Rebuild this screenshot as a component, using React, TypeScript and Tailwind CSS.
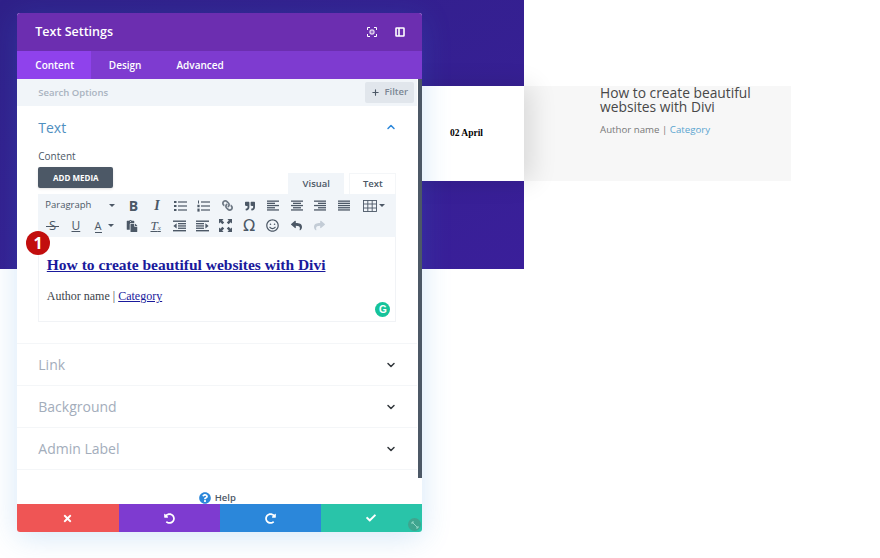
import type { ReactNode } from "react";
import { ChevronDown, ChevronUp, Plus } from "lucide-react";
import { FaCheck, FaLink, FaQuoteRight, FaPaste, FaRegSmile, FaReply, FaShare, FaTimes, FaUndoAlt, FaRedoAlt, FaQuestionCircle } from "react-icons/fa";

const OPEN_SANS = "[font-family:'Open_Sans',sans-serif]";
const SERIF = "[font-family:'Liberation_Serif',serif]";

// tinymce style glyph made of plain horizontal lines
function Lines({ rows }: { rows: [number, number][] }) {
  return (
    <svg width="13" height="12" viewBox="0 0 13 12" fill="#4c5866">
      {rows.map(([x, w], i) => (
        <rect key={i} x={x} y={i * (11 / rows.length) + 0.5} width={w} height="1.3" />
      ))}
    </svg>
  );
}

const ALIGN_LEFT: [number, number][] = [[0, 12], [0, 8], [0, 12], [0, 8], [0, 12]];
const ALIGN_CENTER: [number, number][] = [[0, 12], [2, 8], [0, 12], [2, 8], [0, 12]];
const ALIGN_RIGHT: [number, number][] = [[0, 12], [4, 8], [0, 12], [4, 8], [0, 12]];
const ALIGN_FULL: [number, number][] = [[0, 12], [0, 12], [0, 12], [0, 12], [0, 12]];

const BulletList = () => (
  <svg width="13" height="12" viewBox="0 0 13 12" fill="#4c5866">
    <rect x="0" y="1" width="2.5" height="2" /><rect x="0" y="5" width="2.5" height="2" /><rect x="0" y="9" width="2.5" height="2" />
    <rect x="4" y="1.4" width="9" height="1.2" /><rect x="4" y="5.4" width="9" height="1.2" /><rect x="4" y="9.4" width="9" height="1.2" />
  </svg>
);

const NumberList = () => (
  <svg width="13" height="12" viewBox="0 0 13 12" fill="#4c5866">
    <rect x="1" y="0.5" width="1" height="3" /><rect x="0.4" y="4.8" width="2.2" height="2.4" /><rect x="0.4" y="8.6" width="2.2" height="3" />
    <rect x="4" y="1.4" width="9" height="1.2" /><rect x="4" y="5.4" width="9" height="1.2" /><rect x="4" y="9.4" width="9" height="1.2" />
  </svg>
);

const Indent = ({ flip }: { flip?: boolean }) => (
  <svg width="13" height="12" viewBox="0 0 13 12" fill="#4c5866" className={flip ? "-scale-x-100" : ""}>
    <rect x="0" y="0.5" width="13" height="1.4" /><rect x="0" y="10" width="13" height="1.4" />
    <rect x="5" y="3" width="8" height="1.3" /><rect x="5" y="5.3" width="8" height="1.3" /><rect x="5" y="7.6" width="8" height="1.3" />
    <path d="M3.6 3.2v5.4L0.4 5.9z" />
  </svg>
);

const TableIcon = () => (
  <svg width="14" height="12" viewBox="0 0 14 12" fill="none" stroke="#4c5866" strokeWidth="0.9">
    <rect x="0.5" y="0.5" width="13" height="11" />
    <path d="M0.5 4h13M0.5 8h13M4.8 0.5v11M9.2 0.5v11" />
  </svg>
);

const Fullscreen = () => (
  <svg width="13" height="13" viewBox="0 0 13 13" fill="#4c5866">
    <path d="M0 0h4.6L3.2 1.4l2 2-1.8 1.8-2-2L0 4.6zM13 0v4.6l-1.4-1.4-2 2-1.8-1.8 2-2L8.4 0zM0 13V8.4l1.4 1.4 2-2 1.8 1.8-2 2L4.6 13zM13 13H8.4l1.4-1.4-2-2 1.8-1.8 2 2L13 8.4z" />
  </svg>
);

const Caret = () => <span className="w-0 h-0 border-x-[3px] border-x-transparent border-t-[3px] border-t-[#4c5866]" />;

function Slot({ children, wide }: { children: ReactNode; wide?: boolean }) {
  return (
    <div className={`${wide ? "w-[33px] gap-[7px]" : "w-[23.4px]"} h-5 shrink-0 flex items-center justify-center text-[#4c5866]`}>
      {children}
    </div>
  );
}

function Toolbar() {
  return (
    <div className="bg-[#f1f5f9] h-[43px] px-[2.5px] pt-[1.5px]">
      <div className="flex items-center h-5">
        <div className={`w-[81px] flex items-center justify-between pl-[4.5px] pr-[7px] text-[9.5px] text-[#4c5866] ${OPEN_SANS}`}>
          Paragraph <Caret />
        </div>
        <Slot><span className={`text-[14px] font-bold ${OPEN_SANS}`}>B</span></Slot>
        <Slot><span className={`text-[14px] italic font-bold ${SERIF}`}>I</span></Slot>
        <Slot><BulletList /></Slot>
        <Slot><NumberList /></Slot>
        <Slot><FaLink size={11} className="-scale-x-100 opacity-80" /></Slot>
        <Slot><FaQuoteRight size={10} /></Slot>
        <Slot><Lines rows={ALIGN_LEFT} /></Slot>
        <Slot><Lines rows={ALIGN_CENTER} /></Slot>
        <Slot><Lines rows={ALIGN_RIGHT} /></Slot>
        <Slot><Lines rows={ALIGN_FULL} /></Slot>
        <Slot wide><span className="flex items-center gap-[2px] ml-[3px]"><TableIcon /><Caret /></span></Slot>
      </div>
      <div className="flex items-center h-5">
        <Slot>
          <span className={`relative text-[13px] ${OPEN_SANS}`}>
            S<span className="absolute left-[-3px] right-[-3px] top-[10px] h-px bg-[#4c5866]" />
          </span>
        </Slot>
        <Slot><span className={`text-[12px] underline ${OPEN_SANS}`}>U</span></Slot>
        <div className="w-[33px] h-5 shrink-0 flex items-center justify-center gap-[6px] text-[#4c5866]">
          <span className={`text-[11px] border-b border-[#4c5866] leading-[13px] ${OPEN_SANS}`}>A</span><Caret />
        </div>
        <Slot><FaPaste size={12} /></Slot>
        <Slot><span className={`text-[13px] italic underline ${SERIF}`}>T<span className="text-[7px] no-underline">x</span></span></Slot>
        <Slot><Indent /></Slot>
        <Slot><Indent flip /></Slot>
        <Slot><Fullscreen /></Slot>
        <Slot><span className="text-[16px] [font-family:'DejaVu_Sans',sans-serif]">Ω</span></Slot>
        <Slot><FaRegSmile size={13} /></Slot>
        <Slot><FaReply size={11} /></Slot>
        <Slot><FaShare size={11} className="text-[#c3ccd6]" /></Slot>
      </div>
    </div>
  );
}

function Collapsed({ label }: { label: string }) {
  return (
    <div className="h-[42px] border-b border-[#f4f6f8] flex items-center justify-between pl-[21px] pr-[20px]">
      <span className="text-[14px] text-[#a3adbb]">{label}</span>
      <ChevronDown size={12} strokeWidth={3} className="text-[#32373c]" />
    </div>
  );
}

function SettingsModal() {
  return (
    <div className={`absolute z-20 left-[17.3px] top-[13px] w-[405px] h-[519px] flex flex-col rounded-[3px] overflow-hidden bg-white shadow-[0_5px_30px_rgba(43,135,218,0.2)] ${OPEN_SANS}`}>
      <div className="h-[38px] shrink-0 bg-[#6c2eb0] flex items-center justify-between pl-[18px] pr-[17px] pt-[1px]">
        <span className="text-[12.5px] font-semibold text-white">Text Settings</span>
        <div className="flex items-center gap-[18px] mb-[1px]">
          <svg width="10" height="10" viewBox="0 0 10 10" fill="none" stroke="#fff" strokeWidth="1">
            <path d="M0.5 3V0.5H3M7 0.5h2.5V3M9.5 7v2.5H7M3 9.5H0.5V7" />
            <rect x="3" y="3" width="4" height="4" rx="1" fill="#fff" fillOpacity="0.3" />
          </svg>
          <svg width="10" height="10" viewBox="0 0 10 10" fill="none" stroke="#fff" strokeWidth="1.6">
            <rect x="1" y="1" width="8" height="8" rx="0.5" />
            <path d="M4 1v8" />
          </svg>
        </div>
      </div>
      <div className="h-[28px] shrink-0 bg-[#7e3bd0] flex items-center text-[10px] font-semibold text-white">
        <div className="w-[73.5px] h-full bg-[#8f42ec] flex items-center pl-[18px]">Content</div>
        <div className="pl-[18px]">Design</div>
        <div className="pl-[35px]">Advanced</div>
      </div>
      <div className="flex-1 min-h-0 flex flex-col relative">
        <div className="absolute right-0 top-0 w-[4.5px] h-[399px] bg-[#4c5866]" />
        <div className="h-[27px] shrink-0 mr-[5px] bg-[#f1f5f9] flex items-center justify-between pl-[21px] pr-[3px]">
          <span className="text-[9.5px] font-semibold text-[#a9b3c0] pt-[1.5px]">Search Options</span>
          <div className="w-[49px] h-[21px] rounded-[2px] bg-[#e1e6ec] flex items-center justify-center gap-[4px] text-[9.5px] font-semibold text-[#7b8694]">
            <Plus size={9} strokeWidth={3} className="text-[#4c5866]" /> Filter
          </div>
        </div>
        <div className="mr-[5px]">
          <div className="h-[238px] border-b border-[#f4f6f8] pl-[21px] pr-[21px]">
            <div className="h-[42px] flex items-center justify-between">
              <span className="text-[14px] text-[#4f8fbf]">Text</span>
              <ChevronUp size={12} strokeWidth={3} className="text-[#2b87da] mr-[-1px]" />
            </div>
            <div className="text-[10px] font-medium text-[#4c5866] h-[19px] flex items-end pb-[3px]">Content</div>
            <div className="flex items-end justify-between">
              <div className="mb-[6px] w-[75px] h-[21px] rounded-[2px] bg-[#4c5866] shadow-sm flex items-center justify-center text-[8px] font-bold text-white">ADD MEDIA</div>
              <div className="flex gap-[5px] text-[9.5px] font-semibold text-[#4c5866]">
                <div className="w-[56px] h-[21px] bg-[#f1f5f9] flex items-center justify-center pt-[1px]">Visual</div>
                <div className="w-[47px] h-[21px] border border-b-0 border-[#f4f6f8] flex items-center justify-center pt-[1px]">Text</div>
              </div>
            </div>
            <Toolbar />
            <div className={`relative h-[85px] border border-t-0 border-[#f1f3f6] pl-[7.5px] pt-[20px] ${SERIF}`}>
              <div className="text-[15.5px] font-bold leading-[16px] text-[#1a1a9c] underline whitespace-nowrap">How to create beautiful websites with Divi</div>
              <div className="mt-[16px] text-[12px] leading-[14px] text-[#3c434a]">
                Author name | <span className="text-[#1a1a9c] underline">Category</span>
              </div>
              <div className="absolute right-[5px] bottom-[4px] w-[15px] h-[15px] rounded-full bg-[#15c39a] flex items-center justify-center text-white text-[10px] font-bold [font-family:'Liberation_Sans',sans-serif]">G</div>
            </div>
          </div>
          <Collapsed label="Link" />
          <Collapsed label="Background" />
          <Collapsed label="Admin Label" />
        </div>
        <div className="flex-1 flex items-end justify-center gap-[4px] text-[9.5px] font-semibold text-[#4c5866] pr-[5px]">
          <FaQuestionCircle size={12} className="text-[#2b87da] mb-[0.5px]" />
          <span className="leading-[13px]">Help</span>
        </div>
      </div>
      <div className="h-[28px] shrink-0 grid grid-cols-4 text-white relative">
        <div className="bg-[#ef5555] flex items-center justify-center"><FaTimes size={11} /></div>
        <div className="bg-[#7e3bd0] flex items-center justify-center"><FaUndoAlt size={11} /></div>
        <div className="bg-[#2b87da] flex items-center justify-center"><FaRedoAlt size={11} /></div>
        <div className="bg-[#29c4a9] flex items-center justify-center pr-[2px]"><FaCheck size={10} /></div>
        <div className="absolute right-[1px] bottom-[1px] w-[13px] h-[13px] rounded-full bg-[#3fa58f] flex items-center justify-center">
          <svg width="8" height="8" viewBox="0 0 8 8" fill="none" stroke="#8fd6c4" strokeWidth="1"><path d="M1 1l6 6M1 3V1h2M7 5v2H5" /></svg>
        </div>
      </div>
    </div>
  );
}

export default function App() {
  return (
    <div className="relative w-[880px] h-[558px] bg-white overflow-hidden">
      <div className="w-[524px] h-[269px] pt-[86px] bg-gradient-to-br from-[#2f2088] to-[#3a1f9a]">
        <div className="flex w-[791px] h-[95px] pl-[100px]">
          <div className={`w-[424px] shrink-0 bg-white flex items-center pl-[350px] text-[9.5px] font-bold text-black shadow-[8px_0_24px_rgba(0,0,0,0.12)] z-10 ${SERIF}`}>02 April</div>
          <div className={`flex-1 bg-[#f7f7f7] pl-[76px] ${OPEN_SANS}`}>
            <div className="text-[13.8px] leading-[14px] text-[#484848]">How to create beautiful<br />websites with Divi</div>
            <div className="mt-[9px] text-[9.7px] leading-[14px] text-[#777]">Author name | <span className="text-[#5aa5d0]">Category</span></div>
          </div>
        </div>
      </div>
      <SettingsModal />
      <div className={`absolute z-30 left-[26px] top-[231px] w-6 h-6 rounded-full bg-[#c20e0e] flex items-center justify-center text-white text-[16px] font-bold ${OPEN_SANS}`}>1</div>
    </div>
  );
}
